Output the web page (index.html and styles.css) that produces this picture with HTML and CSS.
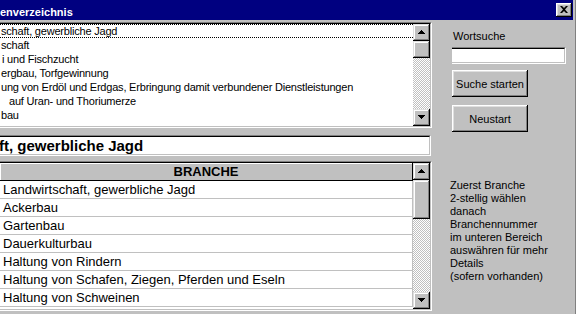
FILE: index.html
```html
<!DOCTYPE html>
<html lang="de">
<head>
<meta charset="utf-8">
<title>Branchenverzeichnis</title>
<link rel="stylesheet" href="styles.css">
</head>
<body>
<div class="window">
  <div class="titlebar">
    <span class="title">enverzeichnis</span>
    <button class="close" aria-label="Schließen">
      <svg width="8" height="7" viewBox="0 0 8 7"><path d="M0 0h2l2 2 2-2h2L5 3.5 8 7H6L4 5 2 7H0l3-3.5z" fill="#000"/></svg>
    </button>
  </div>
  <div class="body">
    <div class="left">
      <div class="field listbox">
        <div class="field-inner list-inner">
          <ul class="items">
            <li class="focus">schaft, gewerbliche Jagd</li>
            <li>schaft</li>
            <li class="ind2">i und Fischzucht</li>
            <li>ergbau, Torfgewinnung</li>
            <li>ung von Erdöl und Erdgas, Erbringung damit verbundener Dienstleistungen</li>
            <li class="ind9">auf Uran- und Thoriumerze</li>
            <li>bau</li>
          </ul>
          <div class="vscroll">
            <div class="sbtn"><svg width="7" height="4" viewBox="0 0 7 4"><path d="M3 0h1v1h1v1h1v1h1v1H0V3h1V2h1V1h1z" fill="#000"/></svg></div>
            <div class="thumb"></div>
            <div class="track"></div>
            <div class="sbtn"><svg width="7" height="4" viewBox="0 0 7 4"><path d="M0 0h7v1H6v1H5v1H4v1H3V3H2V2H1V1H0z" fill="#000"/></svg></div>
          </div>
        </div>
      </div>
      <div class="field selected">
        <div class="field-inner sel-inner">ft, gewerbliche Jagd</div>
      </div>
      <div class="field grid">
        <div class="field-inner grid-inner">
          <div class="grid-main">
            <div class="grid-head">BRANCHE</div>
            <div class="grid-row">Landwirtschaft, gewerbliche Jagd</div>
            <div class="grid-row">Ackerbau</div>
            <div class="grid-row">Gartenbau</div>
            <div class="grid-row">Dauerkulturbau</div>
            <div class="grid-row">Haltung von Rindern</div>
            <div class="grid-row">Haltung von Schafen, Ziegen, Pferden und Eseln</div>
            <div class="grid-row">Haltung von Schweinen</div>
          </div>
          <div class="vscroll">
            <div class="sbtn"><svg width="7" height="4" viewBox="0 0 7 4"><path d="M3 0h1v1h1v1h1v1h1v1H0V3h1V2h1V1h1z" fill="#000"/></svg></div>
            <div class="thumb tall"></div>
            <div class="track"></div>
            <div class="sbtn"><svg width="7" height="4" viewBox="0 0 7 4"><path d="M0 0h7v1H6v1H5v1H4v1H3V3H2V2H1V1H0z" fill="#000"/></svg></div>
          </div>
        </div>
      </div>
    </div>
    <div class="right">
      <label class="label" for="wort">Wortsuche</label>
      <div class="field search"><input id="wort" class="field-inner search-inner" type="text"></div>
      <button class="btn">Suche starten</button>
      <button class="btn second">Neustart</button>
      <p class="note">Zuerst Branche<br>2-stellig wählen<br>danach<br>Branchennummer<br>im unteren Bereich<br>auswähren für mehr<br>Details<br>(sofern vorhanden)</p>
    </div>
  </div>
</div>
</body>
</html>
```

FILE: styles.css
```css
html, body {
  margin: 0;
  padding: 0;
  background: #c0c0c0;
}

.window {
  width: 576px;
  height: 314px;
  box-sizing: border-box;
  overflow: hidden;
  background: #c0c0c0;
  border-right: 1px solid #808080;
  display: flex;
  flex-direction: column;
  font-family: "Liberation Sans", Arial, sans-serif;
  font-size: 11px;
  color: #000;
}

.titlebar {
  height: 20px;
  flex: none;
  margin-right: 2px;
  background: #000080;
  display: flex;
  align-items: center;
  justify-content: space-between;
}

.title {
  color: #fff;
  font-weight: bold;
  font-size: 11px;
  line-height: 16px;
  margin-top: 4px;
  white-space: nowrap;
}

.close {
  width: 16px;
  height: 14px;
  margin: 0 1px 0 0;
  padding: 0;
  border: 0;
  background: #c0c0c0;
  box-shadow: inset -1px -1px #000, inset 1px 1px #fff, inset -2px -2px #808080, inset 2px 2px #dfdfdf;
  display: flex;
  align-items: center;
  justify-content: center;
}

.close svg {
  display: block;
  margin: 0 1px 1px 0;
}

.body {
  flex: 1;
  display: flex;
  padding-top: 2px;
  min-height: 0;
}

.left {
  width: 432px;
  flex: none;
  display: flex;
  flex-direction: column;
}

/* sunken field: outer #808080 / #fff, inner #000 / #c0c0c0 */
.field {
  box-sizing: border-box;
  border-top: 1px solid #808080;
  border-right: 1px solid #fff;
  border-bottom: 1px solid #fff;
}

.field-inner {
  box-sizing: border-box;
  border-top: 1px solid #000;
  border-right: 1px solid #c0c0c0;
  border-bottom: 1px solid #c0c0c0;
  height: 100%;
}

.listbox {
  height: 106px;
  flex: none;
}

.list-inner {
  display: flex;
  background: #fff;
}

.items {
  flex: 1;
  margin: 0;
  padding: 0;
  list-style: none;
  overflow: hidden;
  letter-spacing: -0.2px;
}

.items li {
  height: 14px;
  line-height: 14px;
  white-space: nowrap;
  padding-left: 1px;
  box-sizing: border-box;
}

.items li.focus {
  border-top: 1px dotted #000;
  border-bottom: 1px dotted #000;
  line-height: 12px;
}

.items li.ind2 {
  padding-left: 2px;
}

.items li.ind9 {
  padding-left: 9px;
}

.vscroll {
  width: 17px;
  flex: none;
  display: flex;
  flex-direction: column;
}

.sbtn,
.thumb {
  height: 17px;
  flex: none;
  box-sizing: border-box;
  background: #c0c0c0;
  box-shadow: inset -1px -1px #000, inset 1px 1px #dfdfdf, inset -2px -2px #808080, inset 2px 2px #fff;
  display: flex;
  align-items: center;
  justify-content: center;
}

.sbtn svg {
  display: block;
  margin: 0 1px 1px 0;
}

.thumb.tall {
  height: 39px;
}

.track {
  flex: 1;
  background: repeating-conic-gradient(#fff 0 25%, #c0c0c0 0 50%) 0 0 / 2px 2px;
}

.selected {
  height: 21px;
  width: 431px;
  flex: none;
  margin-top: 7px;
}

.sel-inner {
  background: #fff;
  font-weight: bold;
  font-size: 15px;
  line-height: 17px;
  white-space: nowrap;
  overflow: hidden;
  text-indent: -1px;
}

.grid {
  flex: none;
  height: 150px;
  margin-top: 5px;
}

.grid-inner {
  display: flex;
  background: #c0c0c0;
}

.grid-main {
  width: 413px;
  flex: none;
  background: #fff;
  font-size: 13px;
  overflow: hidden;
}

.grid-head {
  height: 18px;
  box-sizing: border-box;
  background: #c0c0c0;
  border-bottom: 1px solid #000;
  border-right: 1px solid #000;
  box-shadow: inset 1px 1px #fff;
  text-align: center;
  font-weight: bold;
  line-height: 17px;
}

.grid-row {
  height: 18px;
  box-sizing: border-box;
  border-bottom: 1px solid #c0c0c0;
  border-right: 1px solid #c0c0c0;
  line-height: 17px;
  padding-left: 3px;
  white-space: nowrap;
}

.right {
  flex: 1;
  display: flex;
  flex-direction: column;
  align-items: flex-start;
  padding: 8px 0 0 20px;
}

.label {
  line-height: 13px;
  padding-left: 1px;
}

.search {
  width: 114px;
  height: 17px;
  margin-top: 4px;
}

.search-inner {
  display: block;
  width: 100%;
  margin: 0;
  padding: 0 2px;
  border-left: 0;
  outline: none;
  background: #fff;
  font: inherit;
}

.btn {
  width: 76px;
  height: 27px;
  margin-top: 6px;
  padding: 0;
  border: 0;
  background: #c0c0c0;
  box-shadow: inset -1px -1px #000, inset 1px 1px #fff, inset -2px -2px #808080, inset 2px 2px #dfdfdf;
  font-family: "Liberation Sans", Arial, sans-serif;
  font-size: 11px;
  color: #000;
}

.btn.second {
  margin-top: 8px;
}

.note {
  margin: 47px 0 0 -2px;
  line-height: 13px;
  white-space: nowrap;
}
```
